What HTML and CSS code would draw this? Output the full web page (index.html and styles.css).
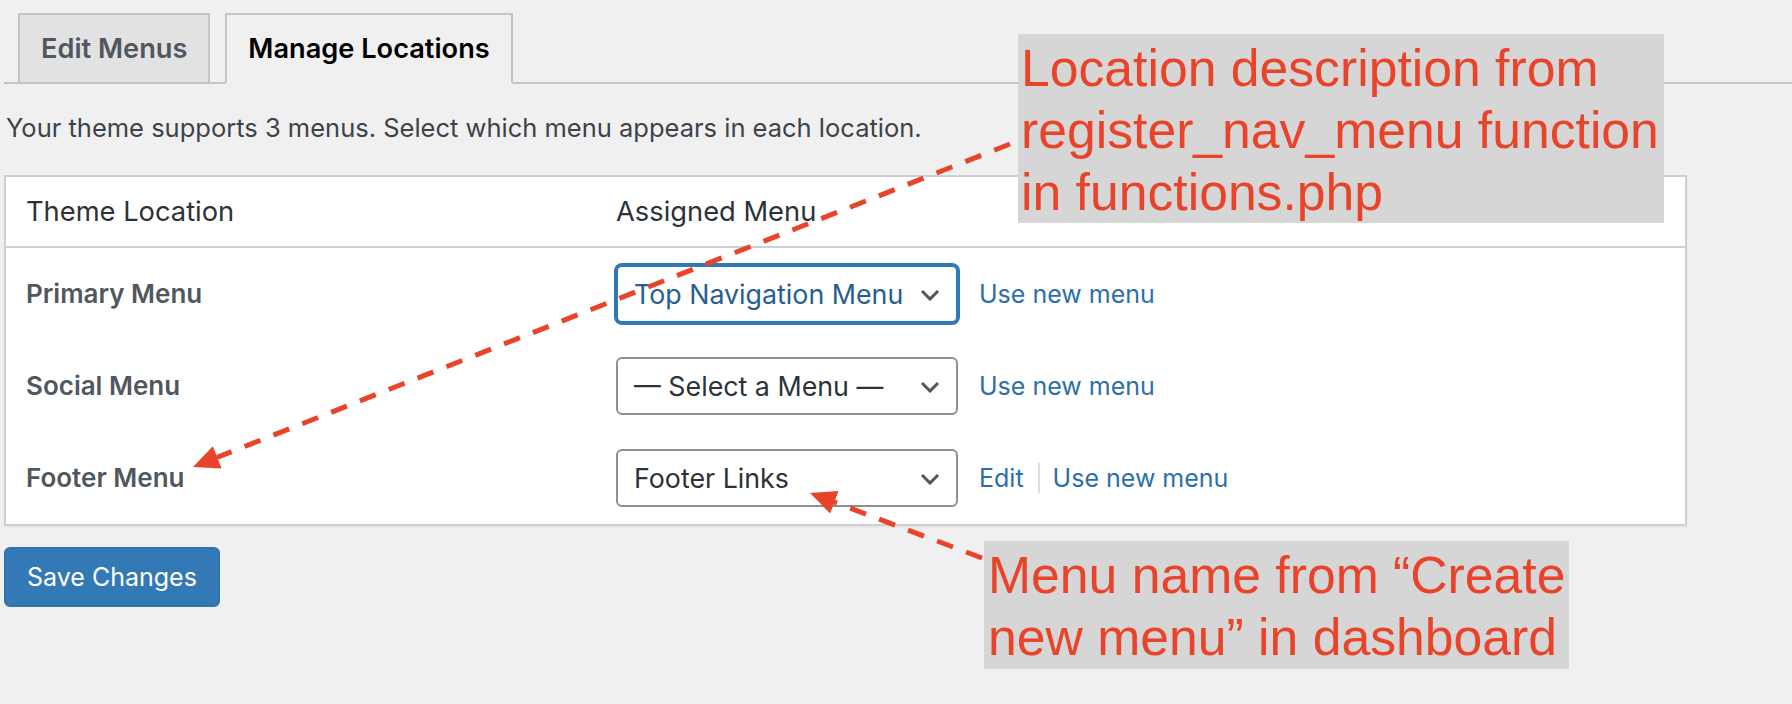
FILE: index.html
```html
<!DOCTYPE html>
<html lang="en">
<head>
<meta charset="utf-8">
<title>Menus - Manage Locations</title>
<link rel="stylesheet" href="styles.css">
</head>
<body>
<div class="wrap">
  <nav class="nav-tabs">
    <a class="nav-tab">Edit Menus</a>
    <a class="nav-tab active">Manage Locations</a>
  </nav>
  <p class="desc">Your theme supports 3 menus. Select which menu appears in each location.</p>
  <div class="locations">
    <div class="row head">
      <div class="cell">Theme Location</div>
      <div class="cell">Assigned Menu</div>
    </div>
    <div class="row">
      <div class="cell label">Primary Menu</div>
      <div class="cell menu">
        <div class="select focused"><span>Top Navigation Menu</span><svg class="chev" width="20" height="12" viewBox="0 0 20 12"><polyline points="2,2 10,10 18,2" fill="none" stroke="#50575e" stroke-width="3"/></svg></div>
        <div class="links"><a>Use new menu</a></div>
      </div>
    </div>
    <div class="row">
      <div class="cell label">Social Menu</div>
      <div class="cell menu">
        <div class="select"><span>— Select a Menu —</span><svg class="chev" width="20" height="12" viewBox="0 0 20 12"><polyline points="2,2 10,10 18,2" fill="none" stroke="#50575e" stroke-width="3"/></svg></div>
        <div class="links"><a>Use new menu</a></div>
      </div>
    </div>
    <div class="row">
      <div class="cell label">Footer Menu</div>
      <div class="cell menu">
        <div class="select"><span>Footer Links</span><svg class="chev" width="20" height="12" viewBox="0 0 20 12"><polyline points="2,2 10,10 18,2" fill="none" stroke="#50575e" stroke-width="3"/></svg></div>
        <div class="links"><a>Edit</a><span class="sep"></span><a>Use new menu</a></div>
      </div>
    </div>
  </div>
  <button class="save">Save Changes</button>
</div>

<div class="note note-top">Location description from<br>register_nav_menu function<br>in functions.php</div>
<div class="note note-bottom">Menu name from “Create<br>new menu” in dashboard</div>

<svg class="arrows" width="1792" height="704" viewBox="0 0 1792 704">
  <line x1="1010" y1="144" x2="217" y2="457.4" stroke="#e9432a" stroke-width="5" stroke-dasharray="17 14"/>
  <polygon points="193,467 221.6,468.6 212.8,446.2" fill="#e9432a"/>
  <line x1="982" y1="558" x2="834" y2="502" stroke="#e9432a" stroke-width="5" stroke-dasharray="17 14"/>
  <polygon points="810,493 838.5,491 830.1,513.4" fill="#e9432a"/>
</svg>
</body>
</html>
```

FILE: styles.css
```css
html, body {
  margin: 0;
  padding: 0;
}
body {
  background: #f0f0f1;
  font-family: "Inter", "Liberation Sans", sans-serif;
  width: 1792px;
  height: 704px;
  overflow: hidden;
  position: relative;
}
.wrap {
  padding: 13px 0 0 4px;
}
.nav-tabs {
  display: flex;
  gap: 15px;
  padding-left: 14px;
  border-bottom: 2px solid #c3c4c7;
}
.nav-tab {
  display: block;
  font-size: 27.2px;
  font-weight: 600;
  line-height: 48px;
  padding: 10px 21px 9px;
  border: 2px solid #c3c4c7;
  margin-bottom: -2px;
  background: #e2e2e3;
  color: #50575e;
}
.nav-tab.active {
  background: #f0f0f1;
  color: #000;
  border-bottom-color: #f0f0f1;
}
.desc {
  margin: 26px 0 29px 2px;
  font-size: 25.5px;
  line-height: 36px;
  color: #3c434a;
}
.locations {
  width: 1679px;
  background: #fff;
  border: 2px solid #ccd0d4;
  box-shadow: 0 2px 2px rgba(0, 0, 0, 0.04);
}
.row {
  display: grid;
  grid-template-columns: 590px 1fr;
  align-items: center;
  height: 92px;
}
.row.head {
  height: 69px;
  border-bottom: 2px solid #ccd0d4;
}
.cell {
  padding-left: 20px;
  font-size: 27.3px;
  line-height: 36px;
  color: #2c3338;
}
.head .cell {
  padding-top: 1px;
}
.label {
  font-weight: 600;
  font-size: 26px;
  color: #50575e;
}
.menu {
  display: flex;
  align-items: center;
}
.select {
  box-sizing: border-box;
  width: 342px;
  height: 58px;
  border: 2px solid #8c8f94;
  border-radius: 6px;
  display: flex;
  align-items: center;
  padding-left: 16px;
  font-size: 26.8px;
  color: #2c3338;
  background: #fff;
}
.select.focused {
  border-color: #3179b5;
  box-shadow: 0 0 0 2px #3179b5;
  color: #265e8f;
}
.chev {
  margin-left: auto;
  margin-right: 16px;
  margin-top: 2px;
  flex: none;
}
.links {
  display: flex;
  align-items: center;
  margin-left: 21px;
  font-size: 25px;
  color: #2f6fa7;
}
.sep {
  display: block;
  width: 2px;
  height: 30px;
  background: #dcdcde;
  margin: 0 13px 0 14px;
}
.save {
  display: block;
  margin-top: 21px;
  height: 60px;
  padding: 0 21px;
  font-family: "Inter", "Liberation Sans", sans-serif;
  font-size: 25px;
  color: #fff;
  background: #3379b5;
  border: 2px solid #3073ad;
  border-radius: 6px;
}
.note {
  position: absolute;
  background: #d6d6d6;
  color: #e9432a;
  font-family: "Liberation Sans", Arial, sans-serif;
  font-size: 51.7px;
  line-height: 62px;
  padding: 3px 0 0 3px;
  box-sizing: border-box;
  white-space: nowrap;
}
.note-top {
  left: 1018px;
  top: 34px;
  width: 646px;
  height: 189px;
}
.note-bottom {
  left: 984px;
  top: 541px;
  width: 585px;
  height: 128px;
  padding-left: 4px;
}
.arrows {
  position: absolute;
  left: 0;
  top: 0;
  pointer-events: none;
}
```
